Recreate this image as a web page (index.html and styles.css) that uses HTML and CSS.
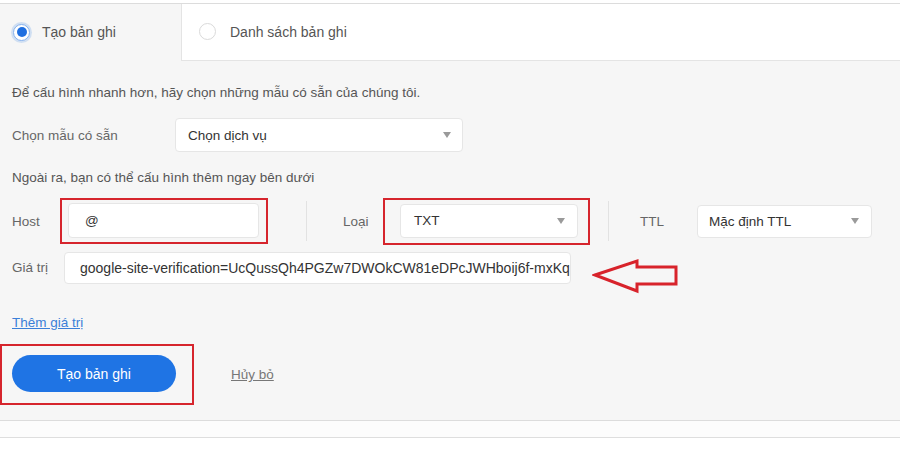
FILE: index.html
```html
<!DOCTYPE html>
<html lang="vi">
<head>
<meta charset="utf-8">
<title>Tạo bản ghi</title>
<link rel="stylesheet" href="styles.css">
</head>
<body>
<div class="page">
  <div class="tabs">
    <div class="tab tab-active"><span class="radio radio-on"></span><span>Tạo bản ghi</span></div>
    <div class="tab tab-idle"><span class="radio"></span><span>Danh sách bản ghi</span></div>
  </div>
  <div class="panel">
    <p class="hint">Để cấu hình nhanh hơn, hãy chọn những mẫu có sẵn của chúng tôi.</p>
    <div class="row row-template">
      <span class="label label-template">Chọn mẫu có sẵn</span>
      <div class="select select-template"><span>Chọn dịch vụ</span><span class="caret"></span></div>
    </div>
    <p class="hint hint-2">Ngoài ra, bạn có thể cấu hình thêm ngay bên dưới</p>
    <div class="row row-record">
      <span class="label label-host">Host</span>
      <div class="mark mark-host"><div class="field field-host">@</div></div>
      <span class="divider"></span>
      <span class="label label-type">Loại</span>
      <div class="mark mark-type"><div class="select select-type"><span>TXT</span><span class="caret"></span></div></div>
      <span class="divider divider-2"></span>
      <span class="label label-ttl">TTL</span>
      <div class="select select-ttl"><span>Mặc định TTL</span><span class="caret"></span></div>
    </div>
    <div class="row row-value">
      <span class="label label-value">Giá trị</span>
      <div class="field field-value">google-site-verification=UcQussQh4PGZw7DWOkCW81eDPcJWHboij6f-mxKq</div>
      <svg class="arrow" width="88" height="36" viewBox="0 0 88 36"><path d="M3 17 L45 3 L45 9 L84 9 L84 26 L45 26 L45 33 Z" fill="none" stroke="#d8232b" stroke-width="3" stroke-linejoin="miter"/></svg>
    </div>
    <a class="add-link" href="#">Thêm giá trị</a>
    <div class="row row-actions">
      <div class="mark mark-btn"><button class="btn-primary" type="button">Tạo bản ghi</button></div>
      <a class="cancel" href="#">Hủy bỏ</a>
    </div>
  </div>
  <div class="footer-strip"></div>
</div>
</body>
</html>
```

FILE: styles.css
```css
* { box-sizing: border-box; }
html, body { margin: 0; padding: 0; background: #fff; }
body {
  font-family: "Liberation Sans", Arial, sans-serif;
  font-size: 13.5px;
  color: #555;
}
.page { padding-top: 3px; }
.tabs {
  display: flex;
  height: 58px;
  border-top: 1px solid #dcdcdc;
}
.tab {
  display: flex;
  align-items: center;
  gap: 12px;
  color: #555;
  font-size: 14px;
  padding-bottom: 1px;
}
.tab-active {
  width: 181px;
  background: #f6f6f6;
  padding-left: 13px;
}
.tab-idle {
  flex: 1;
  background: #fff;
  border-left: 1px solid #e4e4e4;
  border-bottom: 1px solid #e4e4e4;
  padding-left: 17px;
  gap: 14px;
}
.radio {
  width: 17px;
  height: 17px;
  border-radius: 50%;
  border: 1px solid #dadada;
  background: #fff;
  display: flex;
  align-items: center;
  justify-content: center;
}
.radio-on {
  border-color: #86b2ee;
  box-shadow: 0 0 0 2px rgba(40, 120, 230, 0.18);
}
.radio-on::after {
  content: "";
  width: 10px;
  height: 10px;
  border-radius: 50%;
  background: #1f6fe0;
}
.panel {
  background: #f6f6f6;
  padding: 22px 12px 15px;
  border-bottom: 1px solid #dcdcdc;
}
.hint {
  margin: 0;
  line-height: 20px;
  color: #555;
}
.hint-2 { margin-top: 16px; }
.row { display: flex; align-items: center; }
.row-template { margin-top: 15px; }
.label { color: #666; }
.label-template { width: 163px; }
.select, .field {
  background: #fff;
  border: 1px solid #e6e6e6;
  border-radius: 4px;
  color: #333;
}
.select {
  display: flex;
  align-items: center;
  justify-content: space-between;
  padding: 0 11px 0 12px;
}
.select-template { width: 288px; height: 34px; }
.caret {
  width: 0;
  height: 0;
  border-left: 4px solid transparent;
  border-right: 4px solid transparent;
  border-top: 6px solid #9a9a9a;
}
.row-record { margin-top: 10px; height: 46px; }
.label-host { width: 48px; }
.mark {
  border: 2.5px solid #d6252d;
}
.mark-host {
  width: 208px;
  height: 46px;
  padding: 3px 7px 3px 6px;
}
.field-host {
  height: 35px;
  display: flex;
  align-items: center;
  padding-left: 16px;
}
.divider {
  width: 1px;
  height: 40px;
  background: #e2e2e2;
  margin-left: 38px;
  margin-right: 36px;
}
.label-type { width: 40px; }
.mark-type {
  width: 207px;
  height: 47px;
  padding: 4px 10px 4px 15px;
}
.select-type { height: 34px; padding-left: 13px; padding-right: 12px; }
.divider-2 { margin-left: 18px; margin-right: 31px; }
.label-ttl { width: 57px; }
.select-ttl { width: 175px; height: 33px; padding-left: 11px; padding-right: 12px; }
.row-value { margin-top: 8px; align-items: flex-start; }
.label-value { width: 52px; line-height: 32px; }
.field-value {
  width: 507px;
  height: 32px;
  line-height: 30px;
  padding-left: 15px;
  font-size: 14px;
  white-space: nowrap;
  overflow: hidden;
}
.arrow { margin-left: 21px; margin-top: 6px; }
.add-link {
  display: inline-block;
  margin-top: 19px;
  line-height: 20px;
  color: #3b7fd8;
  text-decoration: underline;
}
.row-actions { margin-top: 11px; }
.mark-btn {
  margin-left: -12px;
  width: 194px;
  height: 61px;
  padding: 9px 0 0 10px;
}
.btn-primary {
  width: 164px;
  height: 37px;
  border: none;
  border-radius: 19px;
  background: #1f74e4;
  color: #fff;
  font-family: "Liberation Sans", Arial, sans-serif;
  font-size: 14px;
}
.cancel {
  margin-left: 37px;
  color: #777;
  text-decoration: underline;
}
.footer-strip {
  height: 17px;
  background: #fcfcfc;
  border-bottom: 1px solid #dedede;
}
```
